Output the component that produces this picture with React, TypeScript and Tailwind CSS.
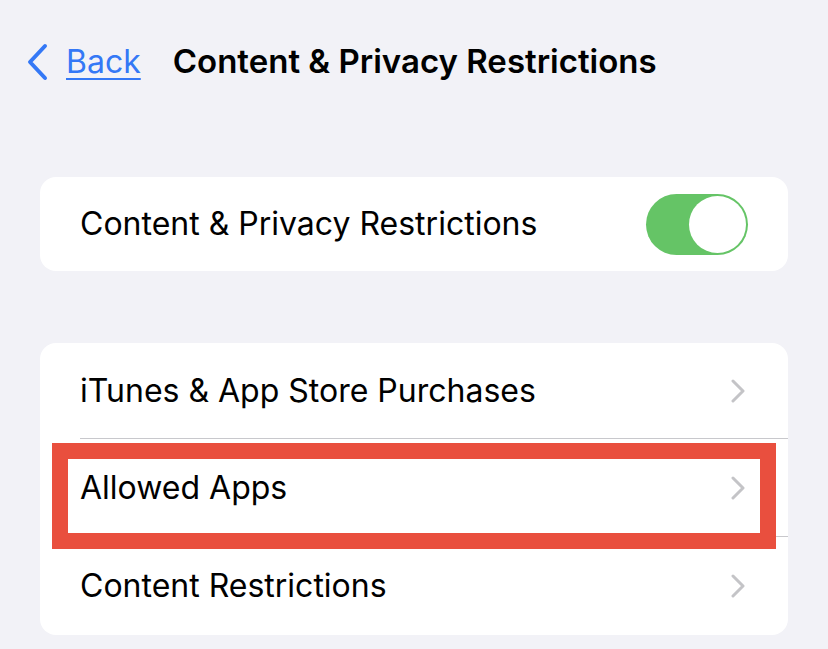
const font = { fontFamily: 'Inter, "Liberation Sans", sans-serif' };

function Chevron() {
  return (
    <svg width="16" height="24" viewBox="0 0 16 24" className="shrink-0">
      <path d="M3 2 L13 12 L3 22" fill="none" stroke="#c4c4c7" strokeWidth="3" strokeLinecap="round" strokeLinejoin="round" />
    </svg>
  );
}

function Row({ label, last, highlight, first }: { label: string; last?: boolean; highlight?: boolean; first?: boolean }) {
  return (
    <div className={`relative flex items-center pl-10 pr-[42px] ${first ? 'h-[96px]' : 'h-[98px]'}`}>
      <span className="flex-1 text-[32px] text-black">{label}</span>
      <Chevron />
      {!last && <div className="absolute left-10 right-0 bottom-0 h-px bg-[#c8c8cc]" />}
      {highlight && (
        <div className="absolute left-3 right-3 top-1 -bottom-3 border-[16px] border-[#e94f3e] pointer-events-none" />
      )}
    </div>
  );
}

export default function App() {
  return (
    <div className="w-[828px] h-[649px] bg-[#f2f2f7] overflow-hidden px-10" style={font}>
      <div className="h-[124px] flex items-center -ml-[14px]">
        <svg width="24" height="38" viewBox="0 0 24 38" className="shrink-0">
          <path d="M19 3 L4 19 L19 35" fill="none" stroke="#3478f6" strokeWidth="4" strokeLinecap="round" strokeLinejoin="round" />
        </svg>
        <span className="ml-4 text-[32px] text-[#3478f6] underline underline-offset-[5px] decoration-2">Back</span>
        <span className="ml-8 text-[33px] font-semibold text-black">Content &amp; Privacy Restrictions</span>
      </div>

      <div className="mt-[53px] h-[94px] bg-white rounded-2xl flex items-center pl-10 pr-10">
        <span className="flex-1 text-[32px] text-black">Content &amp; Privacy Restrictions</span>
        <div className="w-[102px] h-[61px] rounded-full bg-[#65c466] flex items-center justify-end pr-[2px]">
          <div className="w-[57px] h-[57px] rounded-full bg-white" />
        </div>
      </div>

      <div className="mt-[72px] bg-white rounded-2xl">
        <Row label="iTunes & App Store Purchases" first />
        <Row label="Allowed Apps" highlight />
        <Row label="Content Restrictions" last />
      </div>
    </div>
  );
}
